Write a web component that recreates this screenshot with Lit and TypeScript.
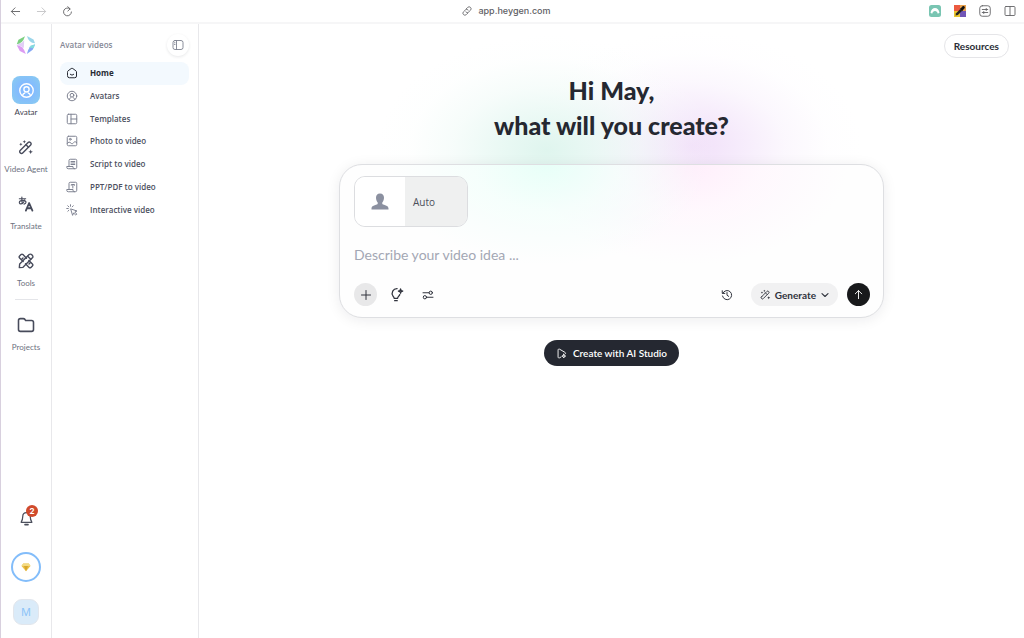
import { LitElement, html, css, svg, nothing } from "lit";
import { customElement } from "lit/decorators.js";
import { classMap } from "lit/directives/class-map.js";

const wand = svg`
  <path d="M3.200 17.200 15.200 5.200a2.400 2.400 0 0 1 3.400 0l.4.400a2.400 2.400 0 0 1 0 3.400L7 21a2.400 2.400 0 0 1-3.400 0l-.4-.4a2.400 2.400 0 0 1 0-3.400z"/>
  <path d="m12 8.500 3.700 3.700"/>
  <path d="M9.500 1.600l.8 1.800 1.800.8-1.800.8-.8 1.800-.8-1.800-1.800-.8 1.800-.8z" fill="currentColor" stroke="none"/>
  <path d="M4.300 5.500l.8 1.700 1.700.8-1.700.8-.8 1.700-.8-1.700L1.800 8l1.700-.8z" fill="currentColor" stroke="none"/>
  <path d="M19 15.800l1 2.400 2.400 1-2.400 1-1 2.400-1-2.400-2.400-1 2.400-1z" fill="currentColor" stroke="none"/>`;

const person = svg`
  <circle cx="12" cy="12" r="9.5"/>
  <circle cx="12" cy="10.4" r="3.7"/>
  <path d="M6.2 19.3c.6-2.2 1.9-3.5 3.6-4.1M17.8 19.3c-.6-2.2-1.900-3.500-3.600-4.100"/>`;

const glyphs: Record<string, unknown> = {
  back: svg`<path d="M21 12H3.500M11 4l-8 8 8 8"/>`,
  forward: svg`<path d="M3 12h17.500M13 4l8 8-8 8"/>`,
  reload: svg`<path d="M17.500 6.200A8.600 8.600 0 1 0 20.600 13"/><path d="M12.500 1.500 17.800 6.300l-5 4.600"/>`,
  link: svg`<path d="m10 7 3.600-3.600a4.600 4.600 0 0 1 6.800 6.800L16 14.400a4.600 4.600 0 0 1-6.800 0"/><path d="m14 17-3.600 3.600a4.600 4.600 0 0 1-6.800-6.800L8 9.600a4.600 4.600 0 0 1 6.800 0"/>`,
  reader: svg`<rect x="1.500" y="1.500" width="21" height="21" rx="5"/><path d="M6.500 9h11M6.500 15h11M14.500 7v4M9.500 13v4"/>`,
  columns: svg`<rect x="2" y="3" width="20" height="18" rx="2"/><path d="M12 3v18"/>`,
  panel: svg`<rect x="2" y="3" width="20" height="18" rx="4"/><path d="M9 3v18M5 7.500h1M5 11h1"/>`,
  person,
  wand,
  translate: svg`
    <g stroke-width="1.700"><path d="M2 4.200h9.500M5.800 1.500c-.3 3.500-.2 6.500.8 9.500"/>
    <path d="M9.800 5.800c-.8 3.200-3.200 6-5.600 6-1.300 0-2.200-.8-2.200-2 0-2.200 2.800-3.300 5.300-3.300 2.900 0 4.700 1.200 4.700 3 0 1.500-1.200 2.400-3 2.700"/></g>
    <path d="m11.800 22 4.900-11.500L21.600 22M13.600 18.400h6.200" stroke-width="2.700"/>`,
  tools: svg`
    <path d="M7.700 12.700 2.400 7.400a2 2 0 0 1 0-2.800l2.200-2.200a2 2 0 0 1 2.800 0l5.300 5.300"/>
    <path d="m16.300 11.300 5.300 5.300a2 2 0 0 1 0 2.800l-2.200 2.200a2 2 0 0 1-2.800 0l-5.300-5.300"/>
    <path d="M2.500 16.500 16.700 2.400a2.600 2.600 0 0 1 3.700 0l1.200 1.200a2.600 2.600 0 0 1 0 3.700L7.500 21.500 2 22z"/>
    <path d="m14.500 4.800 4.700 4.700M7.500 7.500l-1.800 1.800M16.500 16.500l1.800-1.800"/>`,
  folder: svg`<path d="M2 6a2.500 2.500 0 0 1 2.500-2.500h4c.9 0 1.500.4 2 1l1 1.500h8A2.500 2.500 0 0 1 22 8.500V18a2.500 2.500 0 0 1-2.500 2.500h-15A2.500 2.500 0 0 1 2 18z"/>`,
  bell: svg`<path d="M12 2.500c-3.700 0-6 2.800-6 6.200 0 4-.8 6.300-2.600 9.300h17.200c-1.800-3-2.600-5.300-2.600-9.300 0-3.400-2.300-6.200-6-6.200z"/><path d="M9.500 21.800h5" stroke-width="2.400"/>`,
  home: svg`<path d="M3 9.800c0-.9.4-1.600 1.100-2.100l6.300-4.600a2.700 2.700 0 0 1 3.200 0l6.300 4.600c.7.500 1.100 1.200 1.100 2.100V18a3.500 3.500 0 0 1-3.500 3.500h-11A3.500 3.500 0 0 1 3 18z"/><path d="M8.500 14.500c1.900 2.300 5.100 2.300 7 0"/>`,
  template: svg`<rect x="2.500" y="2.500" width="19" height="19" rx="2.500"/><path d="M10 2.500v19M10 12h11.500"/>`,
  photo: svg`<rect x="2.500" y="2.500" width="19" height="19" rx="2.500"/><circle cx="8.500" cy="8.500" r="1.800"/><path d="M2.500 17c2.500-3.600 5-3.600 7.500-.5 2 1.800 3.800 1 5-1.200 2-2.500 4.500-2.300 6.500 0"/>`,
  script: svg`<path d="M6 17V5a2.500 2.500 0 0 1 2.500-2.500H19A2.500 2.500 0 0 1 21.500 5v13.500a3 3 0 0 1-3 3H4.500a3 3 0 0 1-3-3V17H14v1.500a3 3 0 0 0 3 3"/><path d="M10 7h7.500M10 10h7.500M10 13h7.500"/>`,
  ppt: svg`<path d="M6 17V5a2.500 2.500 0 0 1 2.500-2.500H19A2.500 2.500 0 0 1 21.500 5v13.500a3 3 0 0 1-3 3H4.500a3 3 0 0 1-3-3V17H14v1.500a3 3 0 0 0 3 3"/><path d="M10.500 8.500V7h6.500v1.500M13.700 7v7"/>`,
  click: svg`<path d="m10 10 12 4-4.500 2 4 4.200-2 2-4.200-4.200-1.800 4z"/><path d="M9 1.500v3M1.500 9h3M3.500 3.500l2.200 2.200M14.500 3.500l-2 2.200M3.700 14.500l2-2"/>`,
  plus: svg`<path d="M12 3v18M3 12h18"/>`,
  idea: svg`<path d="M13 2.500A7.700 7.700 0 0 0 6.500 14.700c1 1 1.700 2 1.700 3.300h5.600c0-1.300.8-2.400 1.800-3.400.7-.7 1.200-1.500 1.600-2.400"/><path d="M9 21.800h4.200M18.500 3l.9 2.600L22 6.500l-2.600.9-.9 2.600-.9-2.600-2.600-.9 2.600-.9z"/>`,
  sliders: svg`<path d="M2 7.500h12M22 16.500H9"/><circle cx="17.500" cy="7.500" r="3.300"/><circle cx="5.800" cy="16.500" r="3.300"/>`,
  history: svg`<path d="M3.600 8.500A9.200 9.200 0 1 1 3 14M2.500 3.500v5.300h5.200"/><path d="M12 7v5.400l3.400 2.400"/>`,
  chevron: svg`<path d="m3 8 9 8.500L21 8"/>`,
  up: svg`<path d="M12 21V3.500M5 10.500l7-7 7 7"/>`,
  play: svg`<path d="M11 19.500 8 21.300c-1.900 1.100-3.500.2-3.500-2V4.700c0-2.200 1.600-3.100 3.500-2l11.500 6.800c1.600 1 1.900 2.400.6 3.500"/><path d="m17 13.500 1.100 3 3 1.100-3 1.100-1.100 3-1.100-3-3-1.100 3-1.100z"/>`,
};

const icon = (name: string, size: number, stroke = 2) => html`
  <svg class="icon" width=${size} height=${size} viewBox="0 0 24 24" fill="none" stroke="currentColor"
    stroke-width=${stroke} stroke-linecap="round" stroke-linejoin="round" aria-hidden="true">${glyphs[name]}</svg>`;

const base = css`
  *, *::before, *::after { box-sizing: border-box; }
  :host { box-sizing: border-box; }
  button, textarea { font: inherit; color: inherit; border: 0; padding: 0; margin: 0; background: none; }
  button { cursor: pointer; display: flex; align-items: center; justify-content: center; }
  a { color: inherit; text-decoration: none; }
  .icon { display: block; flex: none; }
`;

@customElement("browser-bar")
class BrowserBar extends LitElement {
  static styles = [base, css`
    :host { display: grid; grid-template-columns: 1fr auto 1fr; align-items: center; height: 24px;
      padding: 0 7px; border-bottom: 2px solid #f6f6f7; color: #626265; background: #fff; }
    .group { display: flex; align-items: center; gap: 12px; }
    .group button { width: 14px; height: 20px; }
    .muted { color: #c4c4c6; }
    .address { display: flex; align-items: center; gap: 6px; padding-right: 12px;
      font: 500 9px/14px Inter, sans-serif; color: #606064; }
    .end { justify-content: flex-end; gap: 11px; }
  `];
  render() {
    return html`
      <div class="group">
        <button aria-label="Back">${icon("back", 11)}</button>
        <button class="muted" aria-label="Forward">${icon("forward", 11)}</button>
        <button aria-label="Reload">${icon("reload", 11)}</button>
      </div>
      <div class="address">${icon("link", 10)}<span>app.heygen.com</span></div>
      <div class="group end">
        <button aria-label="VPN extension">
          <svg width="12" height="12" viewBox="0 0 12 12"><rect width="12" height="12" rx="2.500" fill="#79c5b2"/>
            <path d="M1.500 7.800C2 4.600 3.700 3 6 3s4 1.600 4.500 4.800L8.800 8.800C8.300 6.800 7.400 6 6 6s-2.300.8-2.800 2.800z" fill="#fff"/></svg>
        </button>
        <button aria-label="Colour picker extension">
          <svg width="12" height="12" viewBox="0 0 12 12"><path d="M0 0h6v6H0z" fill="#ec5a40"/><path d="M6 0h6v6H6z" fill="#e7a04c"/>
            <path d="M0 6h6v6H0z" fill="#e9c52f"/><path d="M6 6h6v6H6z" fill="#7156b6"/>
            <path d="m1.500 10.500.6-2.200 4.200-4.400 1.900 1.900-4.300 4.200z" fill="#222"/><path d="m5.800 3.600 1-.4 1.800-1.900c1.200-1 3 .8 2 2L8.800 5.200l-.4 1z" fill="#111"/></svg>
        </button>
        <button aria-label="Reader">${icon("reader", 12, 1.8)}</button>
        <button aria-label="Split view">${icon("columns", 12, 1.8)}</button>
      </div>`;
  }
}

@customElement("app-rail")
class AppRail extends LitElement {
  static styles = [base, css`
    :host { display: flex; flex-direction: column; align-items: center; width: 51px; flex: none;
      padding: 11px 0 13px; border-right: 1px solid #e8e8eb; color: #6d7180; }
    .items { display: flex; flex-direction: column; gap: 15px; margin-top: 21px; }
    .item { display: flex; flex-direction: column; align-items: center; gap: 2px;
      font: 400 8px/12px Lato, sans-serif; white-space: nowrap; }
    .tile { display: grid; place-items: center; width: 28px; height: 28px; border-radius: 8px; color: #474b5b; }
    .active { color: #3f4350; }
    .active .tile { color: #fff; background: radial-gradient(circle, #83baff 35%, #8acdee 100%); }
    .divider { width: 23px; height: 1px; margin: 10px 0 11px; border: 0; background: #e4e5e9; }
    .foot { display: flex; flex-direction: column; align-items: center; margin-top: auto; }
    .bell { position: relative; width: 24px; height: 24px; color: #4b4f5c; }
    .badge { position: absolute; top: -1px; right: 0; width: 12px; height: 12px; border-radius: 50%;
      background: #d04a2c; color: #fff; font: 700 8px/12px Inter, sans-serif; }
    .plan { width: 30px; height: 30px; margin: 22px 0 17px; border: 2px solid #83bdfa; border-radius: 50%; }
    .user { width: 26px; height: 26px; border: 1px solid #e2e6ec; border-radius: 9px; background: #daebf9;
      color: #8cc4f8; font: 400 11px/14px "Noto Sans", sans-serif; }
  `];
  private item(name: string, label: string, size: number, active = false) {
    return html`<a class=${classMap({ item: true, active })} href="#">
      <span class="tile">${icon(name, size, active ? 1.9 : 2.1)}</span><span>${label}</span></a>`;
  }
  render() {
    return html`
      <svg width="20" height="20" viewBox="0 0 20 20" role="img" aria-label="HeyGen">
        <path d="M9 1.200 2.500 4.800.8 9.200Q6.500 8.800 9 1.200z" fill="#7bcf80"/>
        <path d="M11 1 17.500 4.500 19 8.300Q12.500 7.800 11 1z" fill="#9bd6ea"/>
        <path d="M.8 10.200Q7.500 10.500 9.800 19L3.800 16z" fill="#dc9cf2"/>
        <path d="M.8 10.200 3 8.600Q6.500 8 8.200 5.200L7.800 13Q5 10.300.8 10.200z" fill="#c9a6ee" opacity=".55"/>
        <path d="M19 9.500Q12.300 10.800 10.900 19l5.800-4.200z" fill="#86a8f4"/>
        <path d="M19 9.300Q15 9.900 12.700 12.600l5 .6z" fill="#82dcdc"/>
      </svg>
      <nav class="items">
        ${this.item("person", "Avatar", 17, true)}
        ${this.item("wand", "Video Agent", 16)}
        ${this.item("translate", "Translate", 16)}
        ${this.item("tools", "Tools", 16)}
      </nav>
      <hr class="divider" />
      ${this.item("folder", "Projects", 18)}
      <div class="foot">
        <button class="bell" aria-label="Notifications">${icon("bell", 15)}<span class="badge">2</span></button>
        <button class="plan" aria-label="Plan">
          <svg width="10" height="9" viewBox="0 0 10 9"><path d="M2.200.5h5.600L9.500 3 5 8.300.5 3z" fill="#ecc24b"/>
            <path d="M2.200.5h5.600L9.500 3h-9z" fill="#f3da83"/><path d="M3 3h4L5 8.300z" fill="#d7a62c"/></svg>
        </button>
        <button class="user" aria-label="Account">M</button>
      </div>`;
  }
}

const links = [
  ["home", "Home"], ["person", "Avatars"], ["template", "Templates"], ["photo", "Photo to video"],
  ["script", "Script to video"], ["ppt", "PPT/PDF to video"], ["click", "Interactive video"],
];

@customElement("side-panel")
class SidePanel extends LitElement {
  static styles = [base, css`
    :host { display: block; width: 147px; flex: none; padding: 10px 9px 10px 8px; border-right: 1px solid #e8e8eb; }
    .head { display: flex; align-items: center; justify-content: space-between; height: 22px;
      font: 600 8px/12px "Open Sans", sans-serif; color: #858896; }
    .toggle { width: 22px; height: 22px; border-radius: 50%; background: #fff; color: #7d8190;
      box-shadow: 0 1px 3px rgb(20 25 40 / 10%); }
    .links { display: grid; grid-auto-rows: 1fr; height: 159px; margin-top: 6px; }
    .link { display: flex; align-items: center; gap: 12px; padding: 0 6px; border-radius: 8px;
      font: 600 8px/12px "Open Sans", sans-serif; color: #4c5060; }
    .link .icon { color: #7f8392; }
    .current, .current .icon { color: #272a33; }
    .current { background: #f3f9fe; font-weight: 700; }
  `];
  render() {
    return html`
      <div class="head"><span>Avatar videos</span>
        <button class="toggle" aria-label="Collapse panel">${icon("panel", 12, 1.8)}</button></div>
      <nav class="links">
        ${links.map(([name, label], i) => html`
          <a href="#" class=${classMap({ link: true, current: i === 0 })} aria-current=${i === 0 ? "page" : nothing}>
            ${icon(name, 12)}<span>${label}</span></a>`)}
      </nav>`;
  }
}

@customElement("prompt-card")
class PromptCard extends LitElement {
  static styles = [base, css`
    :host { display: flex; flex-direction: column; width: 100%; max-width: 545px; padding: 11px 13px 11px 14px;
      border: 1px solid #dedfe2; border-radius: 23px;
      background: radial-gradient(160px 100px at 38% 0, #e8fff8 0, #f2fffbb0 45%, #f8fffd00 100%),
        radial-gradient(160px 100px at 64% 0, #ffeefb 0, #fff5fdb0 45%, #fffafe00 100%), #fefefe;
      box-shadow: 0 2px 14px rgb(20 25 40 / 8%); font-family: Lato, sans-serif; color: #30333d; }
    .avatar { display: grid; grid-template-columns: 50px 1fr; width: 114px; height: 51px; align-self: flex-start;
      border: 1px solid #dcdde0; border-radius: 11px; overflow: hidden; }
    .avatar .face { display: grid; place-items: center; height: 100%; background: #fff; }
    .avatar .name { display: flex; align-items: center; height: 100%; padding-left: 8px; background: #eff0f0;
      font: 500 10px/14px "Open Sans", sans-serif; color: #4c4f5b; }
    .idea { display: block; width: 100%; height: 20px; margin: 18px 0; resize: none; outline: 0;
      overflow: hidden; font: 400 14px/20px Lato, sans-serif; }
    .idea::placeholder { color: #a3a7b4; opacity: 1; }
    .bar, .tools { display: flex; align-items: center; }
    .bar { justify-content: space-between; }
    .tools { gap: 8px; }
    .round { width: 23px; height: 23px; border-radius: 50%; }
    .add { background: #e8e8e9; }
    .generate { height: 23px; gap: 4px; margin: 0 9px 0 12px; padding: 0 9px; border-radius: 12px;
      background: #f1f1f2; font: 700 10px/14px Lato, sans-serif; }
    .generate .icon:last-child { margin-left: 1px; }
    .send { background: #18191b; color: #fff; }
  `];
  render() {
    return html`
      <button class="avatar">
        <span class="face"><svg width="18" height="18" viewBox="0 0 18 18" fill="#8b90a0">
          <path d="M9 .5c2.700 0 4 1.700 4 4.300 0 1.800-.6 3.500-1.700 4.600-.2.900 0 1.600.8 2 2.700.9 5.400 1.500 5.400 4v1.100H.5v-1.100c0-2.500 2.700-3.100 5.400-4 .8-.4 1-1.100.8-2C5.600 8.300 5 6.600 5 4.800 5 2.200 6.300.5 9 .5z"/></svg></span>
        <span class="name">Auto</span>
      </button>
      <textarea class="idea" rows="1" aria-label="Video idea" placeholder="Describe your video idea ..."></textarea>
      <div class="bar">
        <div class="tools">
          <button class="round add" aria-label="Add">${icon("plus", 12)}</button>
          <button class="round" aria-label="Ideas">${icon("idea", 15)}</button>
          <button class="round" aria-label="Settings">${icon("sliders", 12)}</button>
        </div>
        <div class="bar">
          <button class="round" aria-label="History">${icon("history", 12)}</button>
          <button class="generate">${icon("wand", 11)}<span>Generate</span>${icon("chevron", 8, 3.5)}</button>
          <button class="round send" aria-label="Send">${icon("up", 11)}</button>
        </div>
      </div>`;
  }
}

@customElement("app-root")
class AppRoot extends LitElement {
  static styles = [base, css`
    :host { display: flex; flex-direction: column; min-height: 100vh; background: #fff;
      border-left: 1px solid #d8d0de; font-family: Lato, sans-serif; }
    .body { display: flex; flex: 1; }
    .main { display: flex; flex-direction: column; align-items: center; flex: 1; min-width: 0; padding: 10px 15px;
      background: radial-gradient(170px 115px at calc(50% - 65px) 126px, #dff5ee 0, #e4f7f1d0 25%, #eefaf680 55%, #f8fdfb30 80%, #ffffff00 100%),
        radial-gradient(170px 115px at calc(50% + 80px) 122px, #f1dff9 0, #f3e5fad0 25%, #f8f0fc80 55%, #fcf9fe30 80%, #ffffff00 100%), #fff; }
    .resources { align-self: flex-end; height: 24px; padding: 0 9px; border: 1px solid #e5e5e8;
      border-radius: 12px; background: #fff; font: 700 10px/14px Lato, sans-serif; color: #2a2d36; }
    .title { margin: 15px 0 21px; text-align: center; font: 900 25px/35px Lato, sans-serif; color: #252831; }
    .studio { height: 26px; margin-top: 22px; padding: 0 12px; gap: 6px; border-radius: 13px;
      background: #252831; color: #fff; font: 600 10px/14px Lato, sans-serif; }
  `];
  render() {
    return html`
      <browser-bar></browser-bar>
      <div class="body">
        <app-rail></app-rail>
        <side-panel></side-panel>
        <main class="main">
          <button class="resources">Resources</button>
          <h1 class="title">Hi May,<br />what will you create?</h1>
          <prompt-card></prompt-card>
          <button class="studio">${icon("play", 11)}<span>Create with AI Studio</span></button>
        </main>
      </div>`;
  }
}
